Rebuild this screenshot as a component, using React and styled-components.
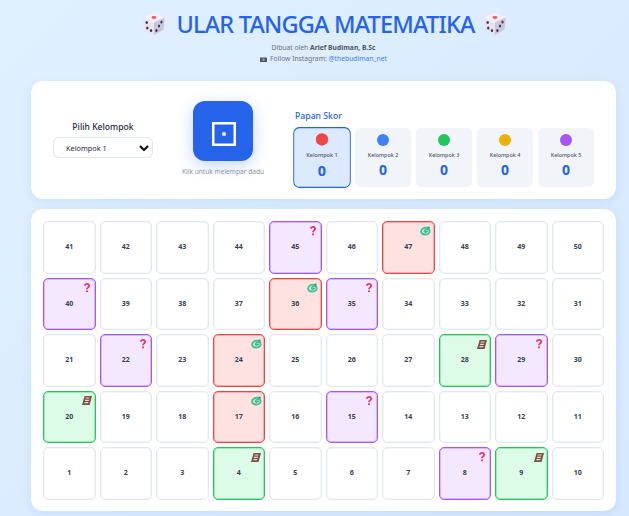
import React from "react";
import styled, { createGlobalStyle } from "styled-components";

const Global = createGlobalStyle`
  html, body { margin: 0; padding: 0; height: 100%; overflow: hidden; }
  body {
    font-family: "Noto Sans", "Open Sans", sans-serif;
    background: linear-gradient(135deg, #e0f0ff 0%, #d6e8fd 100%);
    color: #1f2937;
  }
`;
const Page = styled.div`
  box-sizing: border-box;
  width: 629px;
  height: 516px;
  padding: 9px 13px 0 31px;
`;
const Header = styled.header`
  height: 72px;
  text-align: center;
`;
const Title = styled.h1`
  margin: 0;
  height: 30px;
  display: flex;
  justify-content: center;
  align-items: center;
  gap: 10px;
  padding-left: 2px;
  font-size: 23.5px;
  font-weight: 500;
  color: #2563eb;
  line-height: 30px;
  letter-spacing: -0.8px;
  svg:last-child { margin-left: -2px; }
`;
const SubLine = styled.p`
  margin: 0;
  font-size: 6.75px;
  line-height: 11px;
  color: #6b7280;
  &:first-of-type { margin-top: 3px; }
  b { color: #4b5563; font-weight: 700; }
  a { color: #3b82f6; text-decoration: none; }
  svg { margin-right: 3px; vertical-align: -0.5px; }
`;
const Panel = styled.section`
  box-sizing: border-box;
  background: #fff;
  border-radius: 12px;
  box-shadow: 0 3px 10px rgba(59, 130, 246, 0.12);
`;
const TopPanel = styled(Panel)`
  height: 118px;
  display: flex;
  align-items: center;
  padding: 0 22px;
`;
const Selector = styled.div`
  width: 100px;
  display: flex;
  flex-direction: column;
  align-items: center;
  gap: 3px;
  margin-top: -1px;
`;
const SelectLabel = styled.label`
  font-size: 8.6px;
  font-weight: 500;
  line-height: 13px;
  color: #1f2937;
`;
const SelectWrap = styled.div`
  position: relative;
  width: 100px;
  height: 21px;
`;
const Select = styled.select`
  display: block;
  box-sizing: border-box;
  width: 100%;
  height: 100%;
  appearance: none;
  background: #fff;
  border: 0;
  box-shadow: inset 0 0 0 1px #e2e8f0;
  border-radius: 6px;
  padding: 0 0 0 13px;
  font: 400 7.3px "Noto Sans", sans-serif;
  color: #1f2937;
  outline: none;
`;
const Chevron = styled.svg`
  position: absolute;
  right: 4px;
  top: 8px;
  width: 10px;
  height: 6px;
  pointer-events: none;
`;
const RollArea = styled.div`
  width: 90px;
  margin-left: 25px;
  display: flex;
  flex-direction: column;
  align-items: center;
  gap: 6px;
  margin-top: -3px;
`;
const RollButton = styled.button`
  width: 60px;
  height: 60px;
  border: 0;
  padding: 6px 0 0 1px;
  border-radius: 12px;
  background: #2563eb;
  box-shadow: 0 4px 16px rgba(37, 99, 235, 0.28);
  display: flex;
  align-items: center;
  justify-content: center;
`;
const RollHint = styled.span`
  font-size: 6.6px;
  line-height: 9px;
  color: #8a94a6;
  white-space: nowrap;
`;
const ScoreArea = styled.div`
  margin-left: 26px;
  display: flex;
  flex-direction: column;
  gap: 5px;
  margin-top: 17px;
`;
const ScoreTitle = styled.h2`
  margin: 0 0 0 1px;
  font-size: 8.7px;
  font-weight: 500;
  line-height: 13px;
  color: #2563eb;
`;
const ScoreRow = styled.div`
  display: flex;
  gap: 5px;
`;
const ScoreCard = styled.div`
  box-sizing: border-box;
  width: 56px;
  height: 59px;
  border-radius: 6px;
  background: ${p => (p.$active ? "#dbeafe" : "#f1f5f9")};
  box-shadow: ${p => (p.$active ? "inset 0 0 0 1px #2563eb" : "none")};
  transform: ${p => (p.$active ? "scale(1.03)" : "none")};
  display: flex;
  flex-direction: column;
  align-items: center;
  padding-top: 6px;
`;
const Token = styled.span`
  width: 12px;
  height: 12px;
  border-radius: 50%;
  background: ${p => p.$color};
`;
const ScoreName = styled.span`
  margin-top: 5px;
  font-size: 5.4px;
  line-height: 8px;
  font-weight: 500;
  color: #4b5563;
`;
const ScoreValue = styled.span`
  margin-top: 2px;
  font-size: 14px;
  line-height: 18px;
  font-weight: 700;
  color: #2563eb;
`;
const BoardPanel = styled(Panel)`
  margin-top: 10px;
  padding: 12px;
  height: 302px;
`;
const Board = styled.div`
  display: grid;
  grid-template-columns: repeat(10, 1fr);
  gap: 4px;
`;
const Cell = styled.div`
  box-sizing: border-box;
  position: relative;
  aspect-ratio: 1;
  border-radius: 5px;
  border: 1px solid ${p => p.$border};
  box-shadow: inset 0 0 0 1px ${p => p.$border}55;
  background: ${p => p.$bg};
  display: flex;
  align-items: center;
  justify-content: center;
  padding-bottom: 1px;
  font-size: 7px;
  font-weight: 700;
  color: #374151;
`;
const Badge = styled.span`
  position: absolute;
  top: 3px;
  right: 2px;
  width: 12px;
  height: 12px;
  display: flex;
  align-items: center;
  justify-content: center;
`;

const Die = () => (
  <svg width="24" height="24" viewBox="0 0 24 24">
    <path d="M12 1 L22.5 5.5 L21.5 17.5 L12 23 L2.5 17.5 L1.5 5.5 Z" fill="#e8e4ee" stroke="#e8e4ee" strokeLinejoin="round" />
    <path d="M12 1 L22.5 5.5 L12 10.5 L1.5 5.5 Z" fill="#f4f1f6" stroke="#f4f1f6" strokeLinejoin="round" />
    <path d="M12 10.5 L22.5 5.5 L21.5 17.5 L12 23 Z" fill="#cbc5d8" />
    <ellipse cx="12" cy="5.5" rx="2.5" ry="1.4" fill="#ef5a6f" />
    <ellipse cx="4.7" cy="10.5" rx="1.2" ry="1.6" fill="#40366b" />
    <ellipse cx="5.3" cy="16" rx="1.2" ry="1.6" fill="#40366b" />
    <ellipse cx="9" cy="18.5" rx="1.2" ry="1.6" fill="#40366b" />
    <ellipse cx="19.5" cy="10" rx="1.1" ry="1.6" fill="#40366b" />
    <ellipse cx="17" cy="14" rx="1.1" ry="1.6" fill="#40366b" />
    <ellipse cx="14.4" cy="18.5" rx="1.1" ry="1.6" fill="#40366b" />
  </svg>
);
const Camera = () => (
  <svg width="7" height="5" viewBox="0 0 7 5">
    <rect x="0" y="0.5" width="7" height="4.5" rx="0.5" fill="#4b5563" />
    <circle cx="3.5" cy="2.8" r="1.2" fill="#9ca3af" />
  </svg>
);
const Question = () => (
  <svg width="6" height="9.5" viewBox="0 0 7 11">
    <path d="M1 3.2 C1 0.3 6 0.3 6 3.2 C6 5.2 3.5 5 3.5 7.2" fill="none" stroke="#ea3360" strokeWidth="2.1" />
    <circle cx="3.5" cy="9.6" r="1.3" fill="#ea3360" />
  </svg>
);
const Snake = () => (
  <svg width="11" height="10" viewBox="0 0 11 10">
    <path d="M7 1.8 C4 1.2 1.1 3 1.1 5.4 C1.1 8.3 5.4 9.2 8 8 C10.3 6.9 10.2 3.6 8.2 3.2 C6.4 2.9 4.3 4.2 4.6 5.4 C4.8 6.2 6.4 6.2 7.2 5.4"
      fill="none" stroke="#3fc393" strokeWidth="1.9" strokeLinecap="round" />
    <circle cx="8.6" cy="1.8" r="1.3" fill="#2fa884" />
  </svg>
);
const Ladder = () => (
  <svg width="10" height="9" viewBox="0 0 10 9">
    <path d="M2.6 0 H10 L7.6 9 H0 Z" fill="#7a5245" />
    <path d="M3.8 1.5 H7.6 L7.3 2.6 H3.5 Z M3.2 3.8 H7 L6.7 4.9 H2.9 Z M2.6 6.1 H6.4 L6.1 7.2 H2.3 Z" fill="#e6dbd6" />
  </svg>
);

const kinds = {
  plain: { bg: "#fff", border: "#e2e8f0" },
  question: { bg: "#f3e8ff", border: "#a855f7", Icon: Question },
  snake: { bg: "#fee2e2", border: "#ef4444", Icon: Snake },
  ladder: { bg: "#dcfce7", border: "#22c55e", Icon: Ladder },
};
const special = {
  45: "question", 47: "snake", 40: "question", 36: "snake", 35: "question",
  22: "question", 24: "snake", 28: "ladder", 29: "question", 20: "ladder",
  17: "snake", 15: "question", 4: "ladder", 8: "question", 9: "ladder",
};
const rows = [
  [41, 42, 43, 44, 45, 46, 47, 48, 49, 50],
  [40, 39, 38, 37, 36, 35, 34, 33, 32, 31],
  [21, 22, 23, 24, 25, 26, 27, 28, 29, 30],
  [20, 19, 18, 17, 16, 15, 14, 13, 12, 11],
  [1, 2, 3, 4, 5, 6, 7, 8, 9, 10],
];
const teams = [
  ["Kelompok 1", "#ef4444"],
  ["Kelompok 2", "#3b82f6"],
  ["Kelompok 3", "#22c55e"],
  ["Kelompok 4", "#eab308"],
  ["Kelompok 5", "#a855f7"],
];

export default function App() {
  return (
    <Page>
      <Global />
      <Header>
        <Title><Die />ULAR TANGGA MATEMATIKA<Die /></Title>
        <SubLine>Dibuat oleh <b>Arief Budiman, B.Sc</b></SubLine>
        <SubLine><Camera />Follow Instagram: <a href="#ig">@thebudiman_net</a></SubLine>
      </Header>
      <TopPanel>
        <Selector>
          <SelectLabel htmlFor="team">Pilih Kelompok</SelectLabel>
          <SelectWrap>
            <Select id="team" defaultValue="Kelompok 1">
              {teams.map(([name]) => <option key={name}>{name}</option>)}
            </Select>
            <Chevron viewBox="0 0 10 6">
              <path d="M1 1 L5 5 L9 1" fill="none" stroke="#111" strokeWidth="2.2" />
            </Chevron>
          </SelectWrap>
        </Selector>
        <RollArea>
          <RollButton aria-label="Lempar dadu">
            <svg width="24" height="24" viewBox="0 0 24 24">
              <rect x="1.25" y="1.25" width="21.5" height="21.5" fill="none" stroke="#fff" strokeWidth="2.5" />
              <circle cx="12" cy="12" r="2" fill="#fff" />
            </svg>
          </RollButton>
          <RollHint>Klik untuk melempar dadu</RollHint>
        </RollArea>
        <ScoreArea>
          <ScoreTitle>Papan Skor</ScoreTitle>
          <ScoreRow>
            {teams.map(([name, color], i) => (
              <ScoreCard key={name} $active={i === 0}>
                <Token $color={color} />
                <ScoreName>{name}</ScoreName>
                <ScoreValue>0</ScoreValue>
              </ScoreCard>
            ))}
          </ScoreRow>
        </ScoreArea>
      </TopPanel>
      <BoardPanel>
        <Board>
          {rows.flat().map(n => {
            const kind = kinds[special[n] || "plain"];
            return (
              <Cell key={n} $bg={kind.bg} $border={kind.border}>
                {n}
                {kind.Icon && <Badge><kind.Icon /></Badge>}
              </Cell>
            );
          })}
        </Board>
      </BoardPanel>
    </Page>
  );
}
